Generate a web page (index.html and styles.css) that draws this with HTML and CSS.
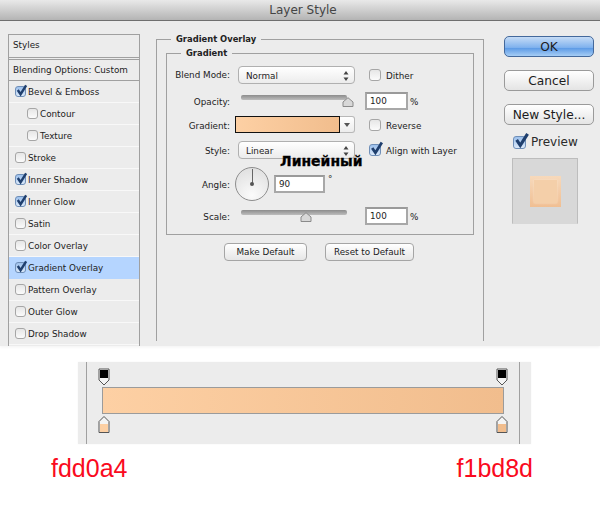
FILE: index.html
```html
<!DOCTYPE html>
<html lang="en">
<head>
<meta charset="utf-8">
<title>Layer Style</title>
<link rel="stylesheet" href="styles.css">
</head>
<body>
<svg class="defs" width="0" height="0" aria-hidden="true">
  <symbol id="tick" viewBox="0 0 14 14"><path d="M3 6.5 L6 11 L12 1.5" fill="none" stroke="#1f3f6e" stroke-width="2.6"/></symbol>
  <symbol id="updown" viewBox="0 0 6 10"><path d="M3 0 L5.5 3.6 H0.5 Z M3 10 L5.5 6.4 H0.5 Z" fill="#444"/></symbol>
  <symbol id="thumb" viewBox="0 0 12 10"><path d="M1 9.5 V5 L6 0.7 L11 5 V9.5 Z" fill="#d8d8d8" stroke="#8a8a8a"/></symbol>
</svg>
<div class="dialog">
  <header class="titlebar">Layer Style</header>
  <div class="panes">
    <nav class="styles">
      <div class="styles-head">Styles</div>
      <div class="styles-blend">Blending Options: Custom</div>
      <div class="item"><span class="cb on"><svg><use href="#tick"/></svg></span>Bevel &amp; Emboss</div>
      <div class="item sub"><span class="cb"></span>Contour</div>
      <div class="item sub"><span class="cb"></span>Texture</div>
      <div class="item"><span class="cb"></span>Stroke</div>
      <div class="item"><span class="cb on"><svg><use href="#tick"/></svg></span>Inner Shadow</div>
      <div class="item"><span class="cb on"><svg><use href="#tick"/></svg></span>Inner Glow</div>
      <div class="item"><span class="cb"></span>Satin</div>
      <div class="item"><span class="cb"></span>Color Overlay</div>
      <div class="item selected"><span class="cb on"><svg><use href="#tick"/></svg></span>Gradient Overlay</div>
      <div class="item"><span class="cb"></span>Pattern Overlay</div>
      <div class="item"><span class="cb"></span>Outer Glow</div>
      <div class="item"><span class="cb"></span>Drop Shadow</div>
    </nav>
    <fieldset class="outer">
      <legend>Gradient Overlay</legend>
      <fieldset class="inner">
        <legend>Gradient</legend>
        <div class="form">
          <label class="lbl lbl-first">Blend Mode:</label>
          <div class="select">Normal<svg class="ud"><use href="#updown"/></svg></div>
          <div class="check"><span class="cb"></span><span class="check-text">Dither</span></div>

          <label class="lbl">Opacity:</label>
          <div class="slider"><div class="track track-long"></div><svg class="thumb thumb-op"><use href="#thumb"/></svg></div>
          <div class="num"><span class="field">100</span><span class="unit">%</span></div>

          <label class="lbl">Gradient:</label>
          <div class="grad-pick"><div class="swatch"></div><div class="drop"></div></div>
          <div class="check"><span class="cb"></span><span class="check-text">Reverse</span></div>

          <label class="lbl">Style:</label>
          <div class="select">Linear<svg class="ud"><use href="#updown"/></svg></div>
          <div class="check"><span class="cb on"><svg><use href="#tick"/></svg></span><span class="check-text">Align with Layer</span></div>

          <label class="lbl lbl-angle">Angle:</label>
          <div class="angle">
            <div class="dial"><div class="needle"></div><div class="hub"></div></div>
            <span class="field field-angle">90</span><span class="deg">°</span>
          </div>

          <label class="lbl">Scale:</label>
          <div class="slider"><div class="track"></div><svg class="thumb thumb-sc"><use href="#thumb"/></svg></div>
          <div class="num"><span class="field">100</span><span class="unit">%</span></div>
        </div>
      </fieldset>
      <div class="defaults">
        <button class="btn btn-make">Make Default</button>
        <button class="btn btn-reset">Reset to Default</button>
      </div>
    </fieldset>
    <aside class="actions">
      <button class="big primary">OK</button>
      <button class="big">Cancel</button>
      <button class="big">New Style...</button>
      <div class="preview-check"><span class="cb cb-big on"><svg><use href="#tick"/></svg></span>Preview</div>
      <div class="preview"><div class="chip"><div class="chip-in"></div></div></div>
    </aside>
  </div>
  <div class="overlay-word">Линейный</div>
</div>
<section class="strip">
  <div class="strip-in">
    <div class="stops">
      <svg class="stop" width="18" height="18" viewBox="0 0 18 18"><path d="M4 1 H14 V12 L9 17 L4 12 Z" fill="#f4f4f4" stroke="#555"/><rect x="5" y="2" width="8" height="8" fill="#000"/></svg>
      <svg class="stop" width="18" height="18" viewBox="0 0 18 18"><path d="M4 1 H14 V12 L9 17 L4 12 Z" fill="#f4f4f4" stroke="#555"/><rect x="5" y="2" width="8" height="8" fill="#000"/></svg>
    </div>
    <div class="bar"></div>
    <div class="stops">
      <svg class="stop" width="18" height="18" viewBox="0 0 18 18"><path d="M4 17.5 H14 V6.5 L9 1.5 L4 6.5 Z" fill="#f4f4f4" stroke="#555"/><rect x="5" y="9" width="8" height="8" fill="#fdd0a4"/></svg>
      <svg class="stop" width="18" height="18" viewBox="0 0 18 18"><path d="M4 17.5 H14 V6.5 L9 1.5 L4 6.5 Z" fill="#f4f4f4" stroke="#555"/><rect x="5" y="9" width="8" height="8" fill="#f1bd8d"/></svg>
    </div>
  </div>
</section>
<footer class="codes"><span>fdd0a4</span><span>f1bd8d</span></footer>
</body>
</html>
```
FILE: styles.css
```css
* { box-sizing: border-box; }
html, body { margin: 0; padding: 0; }
body {
  width: 600px;
  height: 508px;
  background: #fff;
  overflow: hidden;
  font-family: "DejaVu Sans", sans-serif;
  font-size: 8.8px;
  color: #222;
}
.defs { position: absolute; }

.dialog {
  position: relative;
  height: 346px;
  background: #ececec;
  box-shadow: 0 1px 3px #f2f2f2;
}
.titlebar {
  height: 21px;
  padding-left: 6px;
  background: linear-gradient(#e9e9e9, #b4b4b4);
  border-bottom: 1px solid #6f6f6f;
  text-align: center;
  font-size: 12px;
  line-height: 20px;
  color: #444;
}
.panes {
  display: flex;
  align-items: flex-start;
  padding: 13px 0 0 8px;
  height: 325px;
}

/* styles list */
.styles {
  width: 132px;
  height: 312px;
  border: 1px solid #a0a0a0;
  border-bottom: 0;
  overflow: hidden;
}
.styles-head {
  height: 23px;
  padding-left: 4px;
  line-height: 21px;
  border-bottom: 1px solid #a0a0a0;
}
.styles-blend {
  margin-top: 1px;
  height: 22px;
  padding-left: 4px;
  line-height: 21px;
  border-top: 1px solid #a0a0a0;
  border-bottom: 1px solid #a0a0a0;
}
.item {
  height: 22px;
  display: flex;
  align-items: center;
  padding-left: 6px;
  border-bottom: 1px solid #f8f8f8;
}
.item.sub { padding-left: 18px; }
.item.selected { background: #b5d5ff; border-bottom-color: #b5d5ff; }
.item .cb { margin-right: 2px; }

/* checkbox */
.cb {
  position: relative;
  display: inline-block;
  flex: none;
  width: 11px;
  height: 11px;
  border: 1px solid #a6a6a6;
  border-radius: 3px;
  background: linear-gradient(#e6e6e6, #fbfbfb);
}
.cb.on { background: linear-gradient(#9cc0ec, #dbe9fa); border-color: #6f8fb8; }
.cb svg {
  position: absolute;
  left: -1px;
  top: -3px;
  width: 13px;
  height: 13px;
}
.cb-big { width: 13px; height: 13px; }
.cb-big svg { width: 17px; height: 17px; top: -5px; left: -1px; }

/* fieldsets */
fieldset { margin: 0; min-width: 0; }
legend { padding: 0 5px; font-weight: bold; font-size: 8.4px; line-height: 12px; color: #222; }
.outer {
  width: 328px;
  height: 308px;
  margin: -1px 0 0 16px;
  padding: 0 9px;
  border: 1px solid #a0a0a0;
  border-width: 1px 1px 0 1px;
}
.outer > legend { margin-left: 5px; }
.inner {
  width: 308px;
  height: 188px;
  padding: 0;
  margin: 2px 0 0 0;
  border: 1px solid #a0a0a0;
}
.inner > legend { margin-left: 14px; }

.form {
  display: grid;
  grid-template-columns: 68px 134px 1fr;
  grid-template-rows: 26px 24px 25px 26px 40px 18px;
  margin-top: 7px;
  align-items: start;
}
.lbl { text-align: right; padding: 1px 5px 0 0; line-height: 18px; }
.lbl-first { padding-top: 0; }
.lbl-angle { padding-top: 9px; }

.select {
  position: relative;
  width: 117px;
  height: 18px;
  margin-left: 3px;
  padding-left: 7px;
  line-height: 18px;
  border: 1px solid #b0b0b0;
  border-radius: 4px;
  background: linear-gradient(#fff, #ececec);
}
.ud { position: absolute; right: 5px; top: 4px; width: 6px; height: 10px; }

.check { display: flex; align-items: center; height: 18px; }
.check .cb { margin-right: 5px; width: 12px; height: 12px; }
.check .cb svg { width: 15px; height: 15px; top: -4px; left: -1px; }
.check-text { padding-top: 2px; }

.slider { position: relative; height: 18px; margin-left: 6px; }
.track {
  position: absolute;
  left: 0;
  top: 3px;
  width: 106px;
  height: 5px;
  border-radius: 2px;
  background: linear-gradient(#8c8c8c, #bdbdbd);
}
.thumb { position: absolute; top: 5px; width: 12px; height: 10px; }
.thumb-op { left: 101px; }
.thumb-sc { left: 59px; }

.num { display: flex; align-items: center; margin-left: -4px; }
.field {
  display: block;
  width: 43px;
  height: 18px;
  padding-left: 3px;
  line-height: 15px;
  background: #fff;
  border: 2px solid #a8a8a8;
  border-top-color: #9a9a9a;
}
.unit { margin-left: 2px; padding-top: 2px; }

.grad-pick {
  display: flex;
  width: 120px;
  height: 17px;
}
.swatch {
  width: 105px;
  border: 1px solid #111;
  background: linear-gradient(90deg, #fdd0a4, #f1bd8d);
}
.drop {
  position: relative;
  flex: 1;
  border: 1px solid #b8b8b8;
  border-left: 0;
  border-radius: 0 3px 3px 0;
  background: linear-gradient(#fff, #ececec);
}
.drop::after {
  content: "";
  position: absolute;
  left: 4px;
  top: 6px;
  border: 3px solid transparent;
  border-top: 4px solid #555;
}

.angle { grid-column: 2 / 4; display: flex; align-items: flex-start; }
.dial {
  position: relative;
  width: 34px;
  height: 34px;
  border: 1px solid #8e8e8e;
  border-radius: 50%;
  background: radial-gradient(circle at 50% 85%, #fbfbfb, #dcdcdc);
}
.needle { position: absolute; left: 16px; top: 1px; width: 1px; height: 15px; background: #666; }
.hub { position: absolute; left: 14px; top: 14px; width: 4px; height: 4px; border-radius: 50%; background: #555; }
.field-angle { width: 51px; margin: 8px 0 0 5px; }
.deg { margin: 7px 0 0 3px; }

.defaults { display: flex; margin: 8px 0 0 58px; }
.btn {
  height: 18px;
  padding: 0;
  font: 8.8px "DejaVu Sans", sans-serif;
  color: #222;
  border: 1px solid #a5a5a5;
  border-radius: 4px;
  background: linear-gradient(#fff, #e6e6e6);
}
.btn-make { width: 83px; margin-right: 18px; }
.btn-reset { width: 89px; }

/* right column */
.actions {
  margin-left: 20px;
  width: 90px;
  display: flex;
  flex-direction: column;
  align-items: center;
  padding-top: 2px;
}
.big {
  width: 90px;
  height: 21px;
  margin-bottom: 13px;
  padding: 0;
  font: 12.2px "DejaVu Sans", sans-serif;
  color: #1c1c1c;
  border: 1px solid #9a9a9a;
  border-radius: 5px;
  background: linear-gradient(#fff, #e4e4e4);
}
.primary {
  border-color: #44699c;
  background: linear-gradient(#c6dcf6, #80b2ee 55%, #5f9ce6 60%, #a6cdf5);
}
.preview-check {
  display: flex;
  align-items: center;
  align-self: flex-start;
  margin: -5px 0 0 9px;
  font-size: 12px;
  height: 18px;
  color: #2a2a2a;
}
.preview-check .cb { margin-right: 5px; }
.preview {
  display: flex;
  align-items: center;
  justify-content: center;
  width: 66px;
  height: 66px;
  margin: 7px 0 0 8px;
  align-self: flex-start;
  background: #d8d8d8;
  border: 1px solid #bdbdbd;
  border-bottom-color: #d8d8d8;
}
.chip {
  display: flex;
  align-items: center;
  justify-content: center;
  width: 31px;
  height: 31px;
  background: linear-gradient(#f7d9bb, #f0bf93);
}
.chip-in {
  width: 23px;
  height: 23px;
  background: #f4cfa9;
  box-shadow: 0 0 2px #f9e2cb;
}

/* annotation laid over the dialog */
.overlay-word {
  position: absolute;
  left: 280px;
  top: 153px;
  font-family: "DejaVu Sans", sans-serif;
  font-weight: bold;
  font-size: 14px;
  line-height: 16px;
  color: #000;
  -webkit-text-stroke: 0.3px #000;
}

/* gradient strip */
.strip {
  width: 453px;
  height: 82px;
  margin: 16px 0 0 78px;
  background: #ececec;
  box-shadow: 0 0 2px #f4f4f4;
  padding-left: 8px;
}
.strip-in {
  width: 434px;
  height: 82px;
  border: 1px solid #a0a0a0;
  border-width: 0 1px;
  padding: 6px 15px 0 15px;
}
.stops { display: flex; justify-content: space-between; margin: 0 -7px; height: 18px; }
.stop { display: block; }
.bar {
  height: 27px;
  margin: 1px 0;
  border: 1px solid #9b9b9b;
  background: linear-gradient(90deg, #fdd0a4, #f1bd8d);
}

.codes {
  display: flex;
  justify-content: space-between;
  margin: 9px 67px 0 51px;
  font-family: "Liberation Sans", sans-serif;
  font-size: 25px;
  line-height: 30px;
  color: #fa0a20;
}
```
